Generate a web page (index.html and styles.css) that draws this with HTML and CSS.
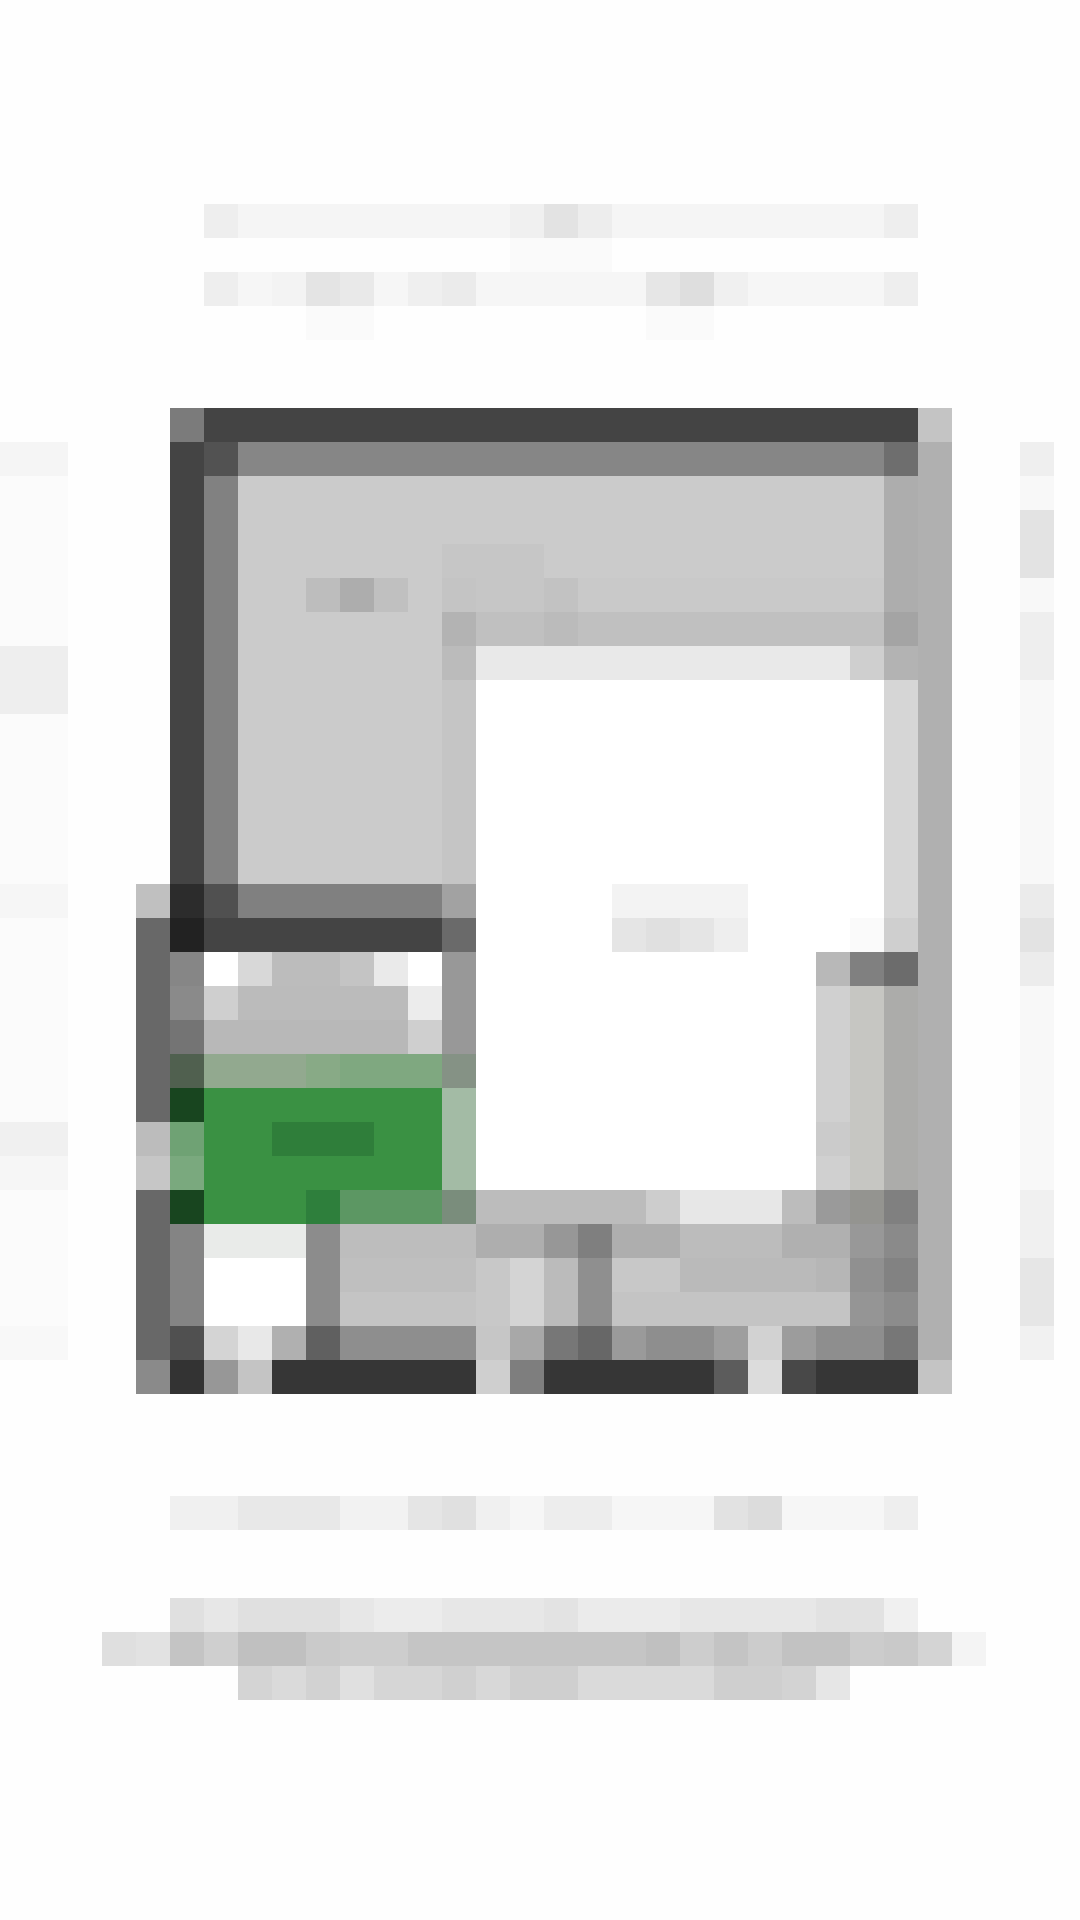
FILE: index.html
```html
<!DOCTYPE html>
<html lang="en">
<head>
<meta charset="UTF-8">
<title>Preview</title>
<link rel="stylesheet" href="styles.css">
</head>
<body>
    <div class="page">
        <!-- heading, pixelated in the source so drawn as blocks -->
        <svg class="heading" viewBox="6 6 21 4" preserveAspectRatio="none" shape-rendering="crispEdges">
            <rect x="6" y="6" width="21" height="1" fill="#f5f5f5"/>
            <rect x="6" y="6" width="1" height="1" fill="#eeeeee"/>
            <rect x="15" y="6" width="1" height="1" fill="#f0f0f0"/>
            <rect x="16" y="6" width="1" height="1" fill="#e3e3e3"/>
            <rect x="17" y="6" width="1" height="1" fill="#ededed"/>
            <rect x="26" y="6" width="1" height="1" fill="#eeeeee"/>
            <rect x="15" y="7" width="3" height="1" fill="#fafafa"/>
            <rect x="6" y="8" width="21" height="1" fill="#f6f6f6"/>
            <rect x="6" y="8" width="1" height="1" fill="#eeeeee"/>
            <rect x="8" y="8" width="1" height="1" fill="#f3f3f3"/>
            <rect x="9" y="8" width="1" height="1" fill="#e4e4e4"/>
            <rect x="10" y="8" width="1" height="1" fill="#e9e9e9"/>
            <rect x="12" y="8" width="1" height="1" fill="#efefef"/>
            <rect x="13" y="8" width="1" height="1" fill="#ebebeb"/>
            <rect x="19" y="8" width="1" height="1" fill="#e6e6e6"/>
            <rect x="20" y="8" width="1" height="1" fill="#dedede"/>
            <rect x="21" y="8" width="1" height="1" fill="#f0f0f0"/>
            <rect x="26" y="8" width="1" height="1" fill="#eeeeee"/>
            <rect x="9" y="9" width="2" height="1" fill="#fafafa"/>
            <rect x="19" y="9" width="2" height="1" fill="#fafafa"/>
        </svg>

        <div class="stage">
            <svg class="peek-left" viewBox="0 13 2 27" preserveAspectRatio="none" shape-rendering="crispEdges">
                <rect x="0" y="13" width="2" height="27" fill="#fbfbfb"/>
                <rect x="0" y="13" width="2" height="1" fill="#f5f5f5"/>
                <rect x="0" y="19" width="2" height="2" fill="#eeeeee"/>
                <rect x="0" y="26" width="2" height="1" fill="#f6f6f6"/>
                <rect x="0" y="33" width="2" height="1" fill="#f0f0f0"/>
                <rect x="0" y="34" width="2" height="1" fill="#f6f6f6"/>
                <rect x="0" y="39" width="2" height="1" fill="#f8f8f8"/>
            </svg>

            <svg class="phone" viewBox="4 12 24 29" preserveAspectRatio="none" shape-rendering="crispEdges">
                <!-- frame -->
                <rect x="27" y="13" width="1" height="27" fill="#b0b0b0"/>
                <rect x="5" y="12" width="1" height="1" fill="#7b7b7b"/>
                <rect x="6" y="12" width="21" height="1" fill="#444444"/>
                <rect x="27" y="12" width="1" height="1" fill="#c4c4c4"/>
                <rect x="5" y="13" width="1" height="13" fill="#444444"/>
                <rect x="6" y="13" width="1" height="1" fill="#525252"/>
                <rect x="7" y="13" width="19" height="1" fill="#868686"/>
                <rect x="26" y="13" width="1" height="1" fill="#6e6e6e"/>
                <rect x="6" y="14" width="1" height="12" fill="#818181"/>
                <!-- top panel -->
                <rect x="7" y="14" width="19" height="4" fill="#cbcbcb"/>
                <rect x="26" y="14" width="1" height="4" fill="#adadad"/>
                <rect x="13" y="16" width="3" height="1" fill="#c6c6c6"/>
                <rect x="9" y="17" width="1" height="1" fill="#bdbdbd"/>
                <rect x="10" y="17" width="1" height="1" fill="#adadad"/>
                <rect x="11" y="17" width="1" height="1" fill="#c0c0c0"/>
                <rect x="13" y="17" width="1" height="1" fill="#c4c4c4"/>
                <rect x="14" y="17" width="2" height="1" fill="#c6c6c6"/>
                <rect x="16" y="17" width="1" height="1" fill="#c2c2c2"/>
                <rect x="17" y="17" width="9" height="1" fill="#c9c9c9"/>
                <rect x="7" y="18" width="6" height="8" fill="#cbcbcb"/>
                <rect x="13" y="18" width="1" height="1" fill="#b3b3b3"/>
                <rect x="14" y="18" width="12" height="1" fill="#c0c0c0"/>
                <rect x="16" y="18" width="1" height="1" fill="#bbbbbb"/>
                <rect x="26" y="18" width="1" height="1" fill="#a4a4a4"/>
                <rect x="13" y="19" width="1" height="1" fill="#bbbbbb"/>
                <rect x="14" y="19" width="11" height="1" fill="#e9e9e9"/>
                <rect x="25" y="19" width="1" height="1" fill="#cfcfcf"/>
                <rect x="26" y="19" width="1" height="1" fill="#b3b3b3"/>
                <!-- white screen -->
                <rect x="13" y="20" width="1" height="6" fill="#c5c5c5"/>
                <rect x="14" y="20" width="12" height="8" fill="#ffffff"/>
                <rect x="26" y="20" width="1" height="7" fill="#d6d6d6"/>
                <rect x="18" y="26" width="4" height="1" fill="#f3f3f3"/>
                <rect x="18" y="27" width="1" height="1" fill="#e5e5e5"/>
                <rect x="19" y="27" width="1" height="1" fill="#e0e0e0"/>
                <rect x="20" y="27" width="1" height="1" fill="#e5e5e5"/>
                <rect x="21" y="27" width="1" height="1" fill="#eeeeee"/>
                <rect x="25" y="27" width="1" height="1" fill="#fafafa"/>
                <rect x="26" y="27" width="1" height="1" fill="#cfcfcf"/>
                <rect x="14" y="28" width="10" height="7" fill="#ffffff"/>
                <!-- bottom left block -->
                <rect x="4" y="26" width="1" height="1" fill="#c0c0c0"/>
                <rect x="5" y="26" width="1" height="1" fill="#2c2c2c"/>
                <rect x="6" y="26" width="1" height="1" fill="#505050"/>
                <rect x="7" y="26" width="6" height="1" fill="#808080"/>
                <rect x="13" y="26" width="1" height="1" fill="#a2a2a2"/>
                <rect x="4" y="27" width="1" height="6" fill="#686868"/>
                <rect x="5" y="27" width="1" height="1" fill="#222222"/>
                <rect x="6" y="27" width="7" height="1" fill="#444444"/>
                <rect x="13" y="27" width="1" height="1" fill="#6a6a6a"/>
                <rect x="5" y="28" width="1" height="1" fill="#868686"/>
                <rect x="6" y="28" width="1" height="1" fill="#ffffff"/>
                <rect x="7" y="28" width="1" height="1" fill="#d8d8d8"/>
                <rect x="8" y="28" width="2" height="1" fill="#bcbcbc"/>
                <rect x="10" y="28" width="1" height="1" fill="#c4c4c4"/>
                <rect x="11" y="28" width="1" height="1" fill="#eaeaea"/>
                <rect x="12" y="28" width="1" height="1" fill="#ffffff"/>
                <rect x="13" y="28" width="1" height="3" fill="#989898"/>
                <rect x="5" y="29" width="1" height="1" fill="#8a8a8a"/>
                <rect x="6" y="29" width="1" height="1" fill="#cfcfcf"/>
                <rect x="7" y="29" width="5" height="1" fill="#bbbbbb"/>
                <rect x="12" y="29" width="1" height="1" fill="#ececec"/>
                <rect x="5" y="30" width="1" height="1" fill="#747474"/>
                <rect x="6" y="30" width="6" height="1" fill="#b8b8b8"/>
                <rect x="12" y="30" width="1" height="1" fill="#cfcfcf"/>
                <!-- green button -->
                <rect x="5" y="31" width="1" height="1" fill="#50604f"/>
                <rect x="6" y="31" width="3" height="1" fill="#92a98f"/>
                <rect x="9" y="31" width="1" height="1" fill="#88aa86"/>
                <rect x="10" y="31" width="3" height="1" fill="#7fa880"/>
                <rect x="13" y="31" width="1" height="1" fill="#859285"/>
                <rect x="5" y="32" width="1" height="1" fill="#18451f"/>
                <rect x="6" y="32" width="7" height="4" fill="#3a9143"/>
                <rect x="13" y="32" width="1" height="3" fill="#a3bba5"/>
                <rect x="4" y="33" width="1" height="1" fill="#bcbcbc"/>
                <rect x="5" y="33" width="1" height="1" fill="#6fa274"/>
                <rect x="8" y="33" width="3" height="1" fill="#2f7e3a"/>
                <rect x="4" y="34" width="1" height="1" fill="#c6c6c6"/>
                <rect x="5" y="34" width="1" height="1" fill="#7aa97e"/>
                <rect x="4" y="35" width="1" height="5" fill="#686868"/>
                <rect x="5" y="35" width="1" height="1" fill="#18451f"/>
                <rect x="9" y="35" width="1" height="1" fill="#2e7f3c"/>
                <rect x="10" y="35" width="3" height="1" fill="#5c9763"/>
                <rect x="13" y="35" width="1" height="1" fill="#7a8d7c"/>
                <!-- right column -->
                <rect x="24" y="28" width="1" height="1" fill="#b8b8b8"/>
                <rect x="25" y="28" width="1" height="1" fill="#808080"/>
                <rect x="26" y="28" width="1" height="1" fill="#6c6c6c"/>
                <rect x="24" y="29" width="1" height="6" fill="#d0d0d0"/>
                <rect x="25" y="29" width="1" height="6" fill="#c6c6c2"/>
                <rect x="26" y="29" width="1" height="6" fill="#acacaa"/>
                <rect x="24" y="33" width="1" height="1" fill="#cbcbcb"/>
                <!-- bottom rows -->
                <rect x="14" y="35" width="5" height="1" fill="#bcbcbc"/>
                <rect x="19" y="35" width="1" height="1" fill="#cdcdcd"/>
                <rect x="20" y="35" width="3" height="1" fill="#e7e7e7"/>
                <rect x="23" y="35" width="1" height="1" fill="#bcbcbc"/>
                <rect x="24" y="35" width="1" height="1" fill="#9a9a9a"/>
                <rect x="25" y="35" width="1" height="1" fill="#949490"/>
                <rect x="26" y="35" width="1" height="1" fill="#808080"/>
                <rect x="5" y="36" width="1" height="3" fill="#848484"/>
                <rect x="6" y="36" width="3" height="1" fill="#e9ebe9"/>
                <rect x="9" y="36" width="1" height="3" fill="#8c8c8c"/>
                <rect x="10" y="36" width="4" height="1" fill="#bdbdbd"/>
                <rect x="14" y="36" width="2" height="1" fill="#aeaeae"/>
                <rect x="16" y="36" width="1" height="1" fill="#979797"/>
                <rect x="17" y="36" width="1" height="1" fill="#7f7f7f"/>
                <rect x="18" y="36" width="2" height="1" fill="#aeaeae"/>
                <rect x="20" y="36" width="3" height="1" fill="#bcbcbc"/>
                <rect x="23" y="36" width="2" height="1" fill="#b0b0b0"/>
                <rect x="25" y="36" width="1" height="1" fill="#989898"/>
                <rect x="26" y="36" width="1" height="1" fill="#8a8a8a"/>
                <rect x="6" y="37" width="3" height="2" fill="#ffffff"/>
                <rect x="10" y="37" width="4" height="1" fill="#bfbfbf"/>
                <rect x="14" y="37" width="1" height="2" fill="#c8c8c8"/>
                <rect x="15" y="37" width="1" height="2" fill="#d4d4d4"/>
                <rect x="16" y="37" width="1" height="2" fill="#bbbbbb"/>
                <rect x="17" y="37" width="1" height="2" fill="#8f8f8f"/>
                <rect x="18" y="37" width="2" height="1" fill="#c8c8c8"/>
                <rect x="20" y="37" width="4" height="1" fill="#bababa"/>
                <rect x="24" y="37" width="1" height="1" fill="#b6b6b6"/>
                <rect x="25" y="37" width="1" height="1" fill="#909090"/>
                <rect x="26" y="37" width="1" height="1" fill="#828282"/>
                <rect x="10" y="38" width="4" height="1" fill="#c4c4c4"/>
                <rect x="18" y="38" width="7" height="1" fill="#c4c4c4"/>
                <rect x="25" y="38" width="1" height="1" fill="#959595"/>
                <rect x="26" y="38" width="1" height="1" fill="#8c8c8c"/>
                <rect x="5" y="39" width="1" height="1" fill="#505050"/>
                <rect x="6" y="39" width="1" height="1" fill="#d4d4d4"/>
                <rect x="7" y="39" width="1" height="1" fill="#e8e8e8"/>
                <rect x="8" y="39" width="1" height="1" fill="#b0b0b0"/>
                <rect x="9" y="39" width="1" height="1" fill="#606060"/>
                <rect x="10" y="39" width="4" height="1" fill="#8e8e8e"/>
                <rect x="14" y="39" width="1" height="1" fill="#c6c6c6"/>
                <rect x="15" y="39" width="1" height="1" fill="#a8a8a8"/>
                <rect x="16" y="39" width="1" height="1" fill="#777777"/>
                <rect x="17" y="39" width="1" height="1" fill="#676767"/>
                <rect x="18" y="39" width="1" height="1" fill="#9a9a9a"/>
                <rect x="19" y="39" width="2" height="1" fill="#8e8e8e"/>
                <rect x="21" y="39" width="1" height="1" fill="#9e9e9e"/>
                <rect x="22" y="39" width="1" height="1" fill="#d2d2d2"/>
                <rect x="23" y="39" width="1" height="1" fill="#9c9c9c"/>
                <rect x="24" y="39" width="2" height="1" fill="#8e8e8e"/>
                <rect x="26" y="39" width="1" height="1" fill="#777777"/>
                <!-- base -->
                <rect x="4" y="40" width="1" height="1" fill="#8a8a8a"/>
                <rect x="5" y="40" width="1" height="1" fill="#333333"/>
                <rect x="6" y="40" width="1" height="1" fill="#979797"/>
                <rect x="7" y="40" width="1" height="1" fill="#c4c4c4"/>
                <rect x="8" y="40" width="6" height="1" fill="#363636"/>
                <rect x="14" y="40" width="1" height="1" fill="#cfcfcf"/>
                <rect x="15" y="40" width="1" height="1" fill="#7e7e7e"/>
                <rect x="16" y="40" width="5" height="1" fill="#363636"/>
                <rect x="21" y="40" width="1" height="1" fill="#5c5c5c"/>
                <rect x="22" y="40" width="1" height="1" fill="#dcdcdc"/>
                <rect x="23" y="40" width="1" height="1" fill="#484848"/>
                <rect x="24" y="40" width="3" height="1" fill="#363636"/>
                <rect x="27" y="40" width="1" height="1" fill="#c4c4c4"/>
            </svg>

            <svg class="peek-right" viewBox="30 13 1 27" preserveAspectRatio="none" shape-rendering="crispEdges">
                <rect x="30" y="13" width="1" height="27" fill="#f8f8f8"/>
                <rect x="30" y="13" width="1" height="1" fill="#efefef"/>
                <rect x="30" y="15" width="1" height="2" fill="#e3e3e3"/>
                <rect x="30" y="18" width="1" height="2" fill="#eeeeee"/>
                <rect x="30" y="26" width="1" height="1" fill="#ebebeb"/>
                <rect x="30" y="27" width="1" height="1" fill="#e3e3e3"/>
                <rect x="30" y="28" width="1" height="1" fill="#ececec"/>
                <rect x="30" y="35" width="1" height="2" fill="#f0f0f0"/>
                <rect x="30" y="37" width="1" height="2" fill="#e6e6e6"/>
                <rect x="30" y="39" width="1" height="1" fill="#f1f1f1"/>
            </svg>
        </div>

        <svg class="caption" viewBox="3 44 26 6" preserveAspectRatio="none" shape-rendering="crispEdges">
            <rect x="5" y="44" width="22" height="1" fill="#f6f6f6"/>
            <rect x="5" y="44" width="2" height="1" fill="#f0f0f0"/>
            <rect x="7" y="44" width="3" height="1" fill="#e8e8e8"/>
            <rect x="10" y="44" width="2" height="1" fill="#f2f2f2"/>
            <rect x="12" y="44" width="1" height="1" fill="#e5e5e5"/>
            <rect x="13" y="44" width="1" height="1" fill="#e0e0e0"/>
            <rect x="14" y="44" width="1" height="1" fill="#f0f0f0"/>
            <rect x="16" y="44" width="2" height="1" fill="#ededed"/>
            <rect x="21" y="44" width="1" height="1" fill="#e2e2e2"/>
            <rect x="22" y="44" width="1" height="1" fill="#dcdcdc"/>
            <rect x="26" y="44" width="1" height="1" fill="#eeeeee"/>

            <rect x="5" y="47" width="22" height="1" fill="#e7e7e7"/>
            <rect x="5" y="47" width="1" height="1" fill="#e0e0e0"/>
            <rect x="7" y="47" width="3" height="1" fill="#e0e0e0"/>
            <rect x="11" y="47" width="2" height="1" fill="#ececec"/>
            <rect x="16" y="47" width="1" height="1" fill="#e3e3e3"/>
            <rect x="17" y="47" width="3" height="1" fill="#ebebeb"/>
            <rect x="24" y="47" width="2" height="1" fill="#e2e2e2"/>
            <rect x="26" y="47" width="1" height="1" fill="#f0f0f0"/>

            <rect x="3" y="48" width="1" height="1" fill="#dfdfdf"/>
            <rect x="4" y="48" width="1" height="1" fill="#e2e2e2"/>
            <rect x="5" y="48" width="1" height="1" fill="#c4c4c4"/>
            <rect x="6" y="48" width="1" height="1" fill="#cfcfcf"/>
            <rect x="7" y="48" width="2" height="1" fill="#c0c0c0"/>
            <rect x="9" y="48" width="1" height="1" fill="#cacaca"/>
            <rect x="10" y="48" width="2" height="1" fill="#cdcdcd"/>
            <rect x="12" y="48" width="7" height="1" fill="#c5c5c5"/>
            <rect x="19" y="48" width="1" height="1" fill="#c0c0c0"/>
            <rect x="20" y="48" width="1" height="1" fill="#cdcdcd"/>
            <rect x="21" y="48" width="1" height="1" fill="#c4c4c4"/>
            <rect x="22" y="48" width="1" height="1" fill="#cccccc"/>
            <rect x="23" y="48" width="2" height="1" fill="#c2c2c2"/>
            <rect x="25" y="48" width="1" height="1" fill="#cccccc"/>
            <rect x="26" y="48" width="1" height="1" fill="#c9c9c9"/>
            <rect x="27" y="48" width="1" height="1" fill="#d4d4d4"/>
            <rect x="28" y="48" width="1" height="1" fill="#f4f4f4"/>

            <rect x="7" y="49" width="1" height="1" fill="#d4d4d4"/>
            <rect x="8" y="49" width="1" height="1" fill="#dadada"/>
            <rect x="9" y="49" width="1" height="1" fill="#d2d2d2"/>
            <rect x="10" y="49" width="1" height="1" fill="#e0e0e0"/>
            <rect x="11" y="49" width="2" height="1" fill="#d6d6d6"/>
            <rect x="13" y="49" width="1" height="1" fill="#d0d0d0"/>
            <rect x="14" y="49" width="1" height="1" fill="#d8d8d8"/>
            <rect x="15" y="49" width="2" height="1" fill="#cfcfcf"/>
            <rect x="17" y="49" width="4" height="1" fill="#dadada"/>
            <rect x="21" y="49" width="2" height="1" fill="#cfcfcf"/>
            <rect x="23" y="49" width="1" height="1" fill="#d3d3d3"/>
            <rect x="24" y="49" width="1" height="1" fill="#e6e6e6"/>
        </svg>
    </div>
</body>
</html>
```

FILE: styles.css
```css
:root {
    --cell: 34px;
}

body {
    margin: 0;
    background-color: #fefefe;
}

.page {
    display: flex;
    flex-direction: column;
    align-items: flex-start;
    width: 1080px;
    height: 1920px;
    overflow: hidden;
    padding-top: calc(var(--cell) * 6);
    box-sizing: border-box;
}

.page svg {
    display: block;
    flex-shrink: 0;
}

.heading {
    width: calc(var(--cell) * 21);
    height: calc(var(--cell) * 4);
    margin-left: calc(var(--cell) * 6);
    margin-bottom: calc(var(--cell) * 2);
}

.stage {
    display: flex;
    align-items: flex-start;
}

.peek-left {
    width: calc(var(--cell) * 2);
    height: calc(var(--cell) * 27);
    margin-top: var(--cell);
    margin-right: calc(var(--cell) * 2);
}

.phone {
    width: calc(var(--cell) * 24);
    height: calc(var(--cell) * 29);
    margin-right: calc(var(--cell) * 2);
}

.peek-right {
    width: var(--cell);
    height: calc(var(--cell) * 27);
    margin-top: var(--cell);
}

.caption {
    width: calc(var(--cell) * 26);
    height: calc(var(--cell) * 6);
    margin-left: calc(var(--cell) * 3);
    margin-top: calc(var(--cell) * 3);
}
```
